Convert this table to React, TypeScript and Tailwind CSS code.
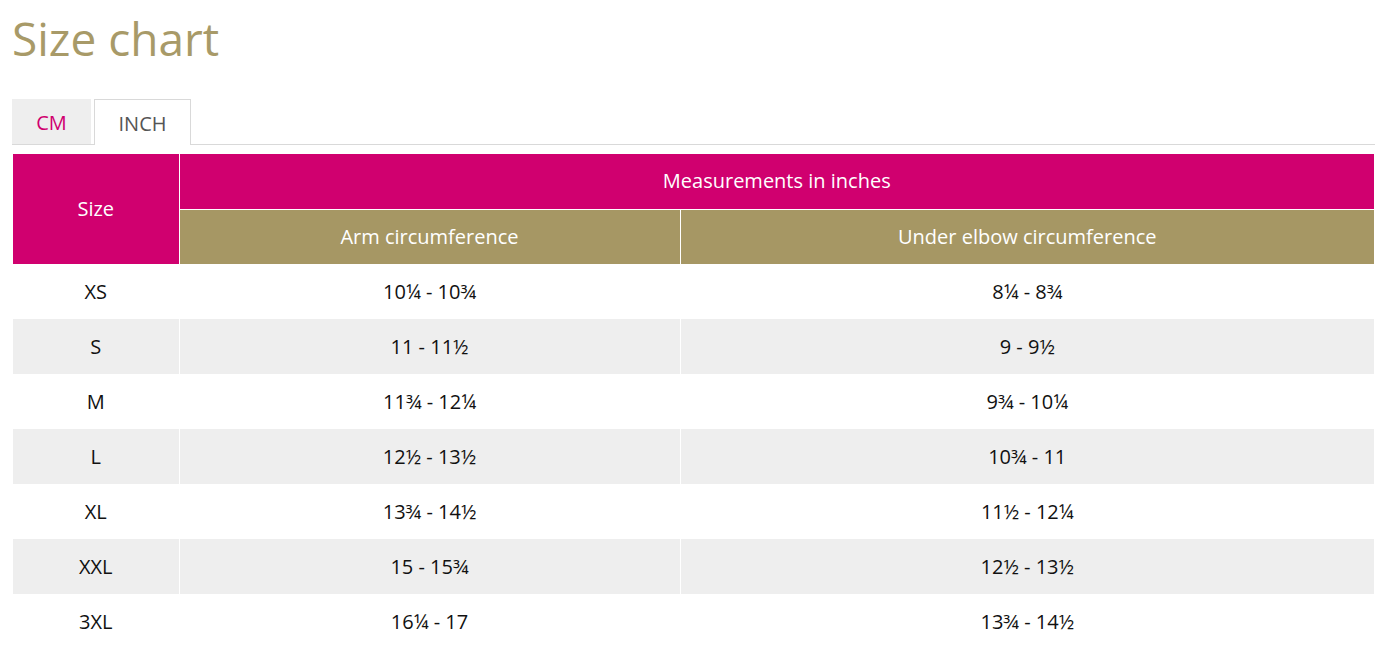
const rows = [
  { size: "XS", arm: "10¼ - 10¾", elbow: "8¼ - 8¾" },
  { size: "S", arm: "11 - 11½", elbow: "9 - 9½" },
  { size: "M", arm: "11¾ - 12¼", elbow: "9¾ - 10¼" },
  { size: "L", arm: "12½ - 13½", elbow: "10¾ - 11" },
  { size: "XL", arm: "13¾ - 14½", elbow: "11½ - 12¼" },
  { size: "XXL", arm: "15 - 15¾", elbow: "12½ - 13½" },
  { size: "3XL", arm: "16¼ - 17", elbow: "13¾ - 14½" },
];

export default function App() {
  return (
    <div className="min-h-screen bg-white pl-3 pr-[8px] pt-[10px] font-['Open_Sans','Noto_Sans',sans-serif]">
      <h1 className="text-[46px] leading-[56px] text-[#a89a68]">Size chart</h1>

      {/* Tabs */}
      <div className="mt-[33px] flex items-end gap-[3px] border-b border-[#d9d9d9]">
        <button className="h-[45px] w-[79px] bg-[#eeeeee] pt-[2px] text-[20px] text-[#d0006f]">CM</button>
        <button className="-mb-px h-[46px] w-[97px] border border-b-0 border-[#d9d9d9] bg-white pt-[2px] text-[20px] text-[#555555]">
          INCH
        </button>
      </div>

      <table className="mt-[9px] ml-px w-[1361px] border-collapse text-[20px]">
        <colgroup>
          <col className="w-[166px]" />
          <col className="w-[501px]" />
          <col />
        </colgroup>
        <thead className="text-white">
          <tr className="h-[55px]">
            <th rowSpan={2} className="border border-white border-t-0 border-l-0 bg-[#d0006f] font-normal">
              Size
            </th>
            <th colSpan={2} className="border border-white border-t-0 border-r-0 bg-[#d0006f] font-normal">
              Measurements in inches
            </th>
          </tr>
          <tr className="h-[55px]">
            <th className="border border-white bg-[#a69764] font-normal">Arm circumference</th>
            <th className="border border-white border-r-0 bg-[#a69764] font-normal">Under elbow circumference</th>
          </tr>
        </thead>
        <tbody className="text-[#111111]">
          {rows.map((r, i) => (
            <tr key={r.size} className={`h-[55px] ${i % 2 === 1 ? "bg-[#eeeeee]" : "bg-white"}`}>
              <td className="border-r border-white text-center">{r.size}</td>
              <td className="border-r border-white text-center">{r.arm}</td>
              <td className="text-center">{r.elbow}</td>
            </tr>
          ))}
        </tbody>
      </table>
    </div>
  );
}
